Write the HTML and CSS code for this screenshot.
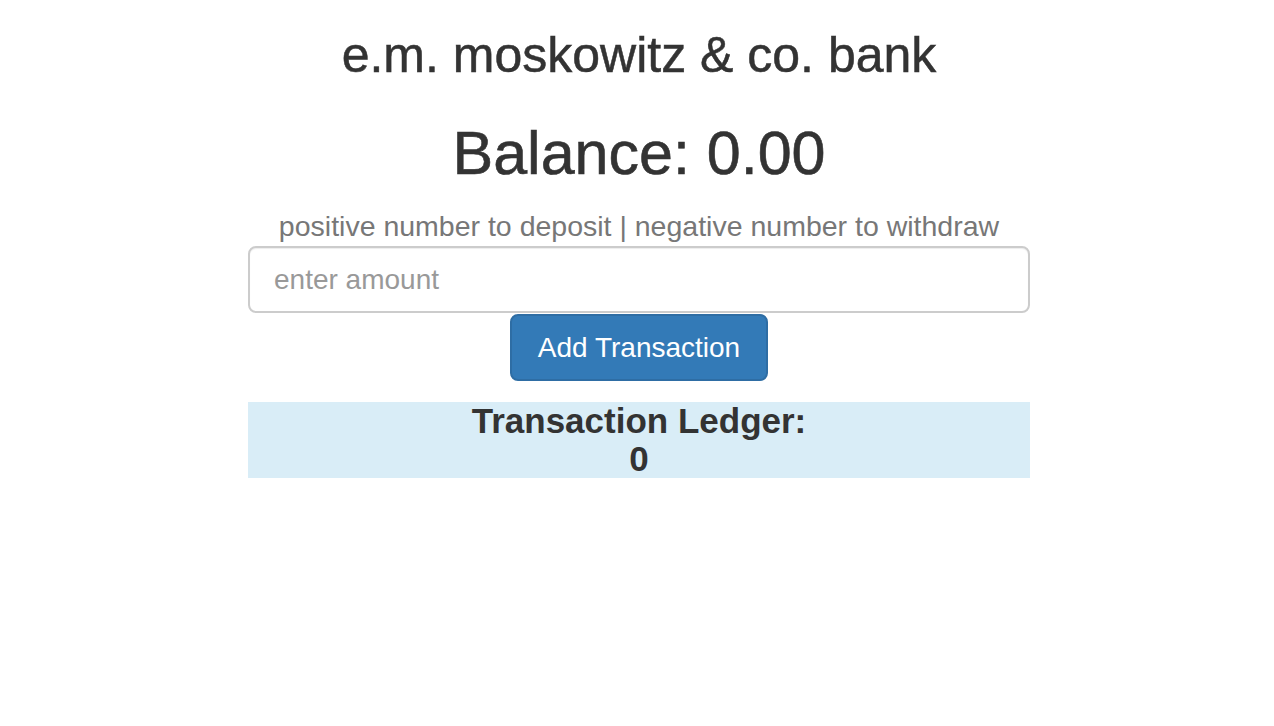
FILE: index.html
```html
<!DOCTYPE html>
<html>
<head>
<meta charset="utf-8">
<title>e.m. moskowitz &amp; co. bank</title>
<link rel="stylesheet" href="styles.css">
</head>
<body>
<div class="page">
  <h1 class="title">e.m. moskowitz &amp; co. bank</h1>
  <h1 class="balance">Balance: 0.00</h1>
  <p class="hint">positive number to deposit | negative number to withdraw</p>
  <input class="amount" type="text" placeholder="enter amount">
  <button class="add-btn" type="button">Add Transaction</button>
  <div class="ledger">
    <h3 class="ledger-title">Transaction Ledger:</h3>
    <h3 class="ledger-count">0</h3>
  </div>
</div>
</body>
</html>
```
FILE: styles.css
```css
* { box-sizing: border-box; }
html, body { margin: 0; background: #fff; }
body {
  padding: 0 0 0 4px;
  font-family: "Liberation Sans", Arial, Helvetica, sans-serif;
  color: #333;
}
.page {
  width: 782px;
  margin: 0 auto;
  display: flex;
  flex-direction: column;
  align-items: center;
  text-align: center;
}
.title {
  margin: 28px 0 0;
  font-size: 50px;
  line-height: 55px;
  font-weight: 400;
  color: #333;
  -webkit-text-stroke: 0.5px #333;
}
.balance {
  margin: 35px 0 0;
  font-size: 61px;
  line-height: 70px;
  font-weight: 400;
  color: #333;
  -webkit-text-stroke: 0.6px #333;
}
.hint {
  margin: 21px 0 0;
  font-size: 28.5px;
  line-height: 34px;
  color: #777;
  white-space: nowrap;
}
.amount {
  margin-top: 3px;
  width: 782px;
  height: 67px;
  padding: 0 24px;
  font-family: inherit;
  font-size: 28px;
  color: #555;
  border: 2px solid #ccc;
  border-radius: 8px;
  background: #fff;
  box-shadow: inset 0 1px 1px rgba(0,0,0,.075);
  outline: none;
}
.amount::placeholder { color: #999; }
.add-btn {
  margin-top: 1px;
  width: 258px;
  height: 67px;
  padding: 0;
  font-family: inherit;
  font-size: 28px;
  color: #fff;
  background: #337ab7;
  border: 2px solid #2e6da4;
  border-radius: 8px;
}
.ledger {
  margin-top: 21px;
  width: 782px;
  background: #d9edf7;
}
.ledger h3 {
  margin: 0;
  font-size: 35px;
  line-height: 38px;
  font-weight: 700;
  color: #333;
}
```
